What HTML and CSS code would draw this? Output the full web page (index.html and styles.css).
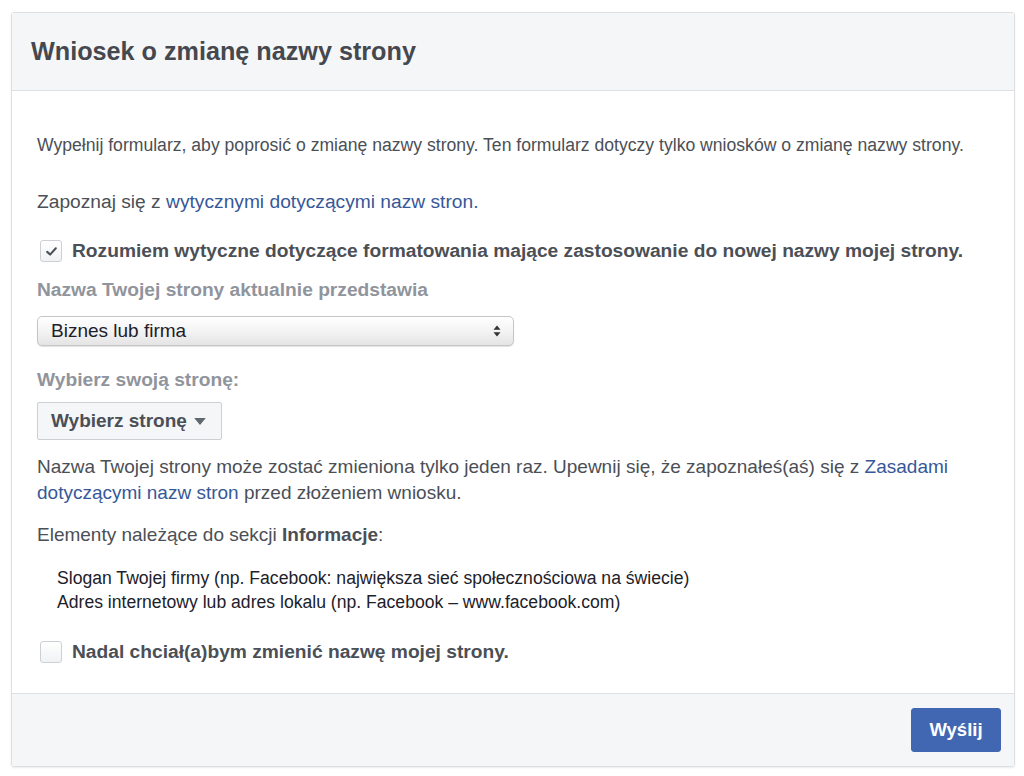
FILE: index.html
```html
<!DOCTYPE html>
<html lang="pl">
<head>
<meta charset="utf-8">
<title>Wniosek o zmianę nazwy strony</title>
<link rel="stylesheet" href="styles.css">
</head>
<body>
<div class="card">
  <div class="card-header">
    <h1 class="title">Wniosek o zmianę nazwy strony</h1>
  </div>
  <div class="card-body">
    <p class="intro">Wypełnij formularz, aby poprosić o zmianę nazwy strony. Ten formularz dotyczy tylko wniosków o zmianę nazwy strony.</p>
    <p class="guide">Zapoznaj się z <a href="#" class="link">wytycznymi dotyczącymi nazw stron.</a></p>
    <label class="check-row check-first">
      <span class="checkbox checked">
        <svg viewBox="0 0 16 16" width="15" height="15"><path d="M3.4 8.4 L6.5 11.3 L12.6 4.6" fill="none" stroke="#4b4f56" stroke-width="2.2" stroke-linecap="round" stroke-linejoin="round"/></svg>
      </span>
      <span class="check-label">Rozumiem wytyczne dotyczące formatowania mające zastosowanie do nowej nazwy mojej strony.</span>
    </label>
    <div class="field-label">Nazwa Twojej strony aktualnie przedstawia</div>
    <div class="select">
      <span class="select-text">Biznes lub firma</span>
      <svg class="select-arrows" viewBox="0 0 8 12" width="8" height="12"><path d="M4 0.5 L7.5 4.8 H0.5 Z M4 11.5 L7.5 7.2 H0.5 Z" fill="#333"/></svg>
    </div>
    <div class="field-label field-label-2">Wybierz swoją stronę:</div>
    <div class="dropdown-btn">
      <span>Wybierz stronę</span>
      <svg viewBox="0 0 10 6" width="12" height="7"><path d="M0 0 H10 L5 6 Z" fill="#606770"/></svg>
    </div>
    <p class="notice">Nazwa Twojej strony może zostać zmieniona tylko jeden raz. Upewnij się, że zapoznałeś(aś) się z <a href="#" class="link">Zasadami</a> <a href="#" class="link">dotyczącymi nazw stron</a> przed złożeniem wniosku.</p>
    <p class="elements">Elementy należące do sekcji <b>Informacje</b>:</p>
    <ul class="items">
      <li>Slogan Twojej firmy (np. Facebook: największa sieć społecznościowa na świecie)</li>
      <li>Adres internetowy lub adres lokalu (np. Facebook – www.facebook.com)</li>
    </ul>
    <label class="check-row check-last">
      <span class="checkbox"></span>
      <span class="check-label">Nadal chciał(a)bym zmienić nazwę mojej strony.</span>
    </label>
  </div>
  <div class="card-footer">
    <button class="submit">Wyślij</button>
  </div>
</div>
</body>
</html>
```

FILE: styles.css
```css
* { box-sizing: border-box; }
html, body { margin: 0; padding: 0; background: #fff; }
body {
  padding: 12px 9px 10px 11px;
  font-family: "Liberation Sans", Arial, sans-serif;
  color: #4b4f56;
}
.card {
  border: 1px solid #dddfe2;
  border-radius: 3px;
  width: 1004px;
  background: #fff;
  box-shadow: 0 1px 2px rgba(0,0,0,0.08);
}
.card-header {
  background: #f5f6f7;
  border-bottom: 1px solid #dddfe2;
  height: 78px;
  display: flex;
  align-items: center;
  padding-left: 19px;
}
.title {
  margin: 0;
  font-size: 25.2px;
  line-height: 30px;
  font-weight: bold;
  color: #45484e;
  padding-bottom: 1px;
}
.card-body {
  padding: 41px 25px 29px 25px;
  font-size: 19px;
}
p { margin: 0; }
.intro { line-height: 26px; font-size: 17.6px; }
.guide { margin-top: 31px; line-height: 26px; font-size: 19.2px; }
.link { color: #365899; text-decoration: none; }
.check-row {
  display: flex;
  align-items: center;
  gap: 10px;
  height: 24px;
  cursor: pointer;
}
.check-first { margin-top: 24px; padding-left: 3px; }
.checkbox {
  width: 22px;
  height: 22px;
  border: 1px solid #ccd0d5;
  border-radius: 3px;
  background: linear-gradient(#fff, #f1f2f4);
  display: flex;
  align-items: center;
  justify-content: center;
  flex: none;
}
.check-label {
  font-size: 19.2px;
  font-weight: bold;
  color: #4b4f56;
}
.field-label {
  margin-top: 15px;
  font-size: 19.2px;
  line-height: 24px;
  font-weight: bold;
  color: #90949c;
}
.select {
  margin-top: 14px;
  width: 477px;
  height: 30px;
  border: 1px solid #c4c6ca;
  border-radius: 5px;
  background: linear-gradient(#ffffff, #f2f2f2 55%, #e4e4e4);
  box-shadow: 0 1px 1px rgba(0,0,0,0.12);
  display: flex;
  align-items: center;
  justify-content: space-between;
  padding: 0 12px 0 13px;
  font-size: 19px;
  color: #1d2129;
}
.field-label-2 { margin-top: 22px; }
.dropdown-btn {
  margin-top: 10px;
  display: flex;
  align-items: center;
  gap: 7px;
  height: 38px;
  width: 185px;
  padding: 0 13px;
  border: 1px solid #ccd0d5;
  border-radius: 2px;
  background: #f5f6f7;
  font-size: 19px;
  font-weight: bold;
  color: #4b4f56;
}
.notice { margin-top: 14px; line-height: 26px; font-size: 19px; }
.elements { margin-top: 16px; line-height: 26px; font-size: 19px; }
.elements b { color: #4b4f56; }
.items {
  list-style: none;
  margin: 18px 0 0 0;
  padding-left: 20px;
  font-size: 17.6px;
  line-height: 24px;
  color: #1d2129;
}
.check-last { margin-top: 26px; padding-left: 3px; }
.card-footer {
  background: #f5f6f7;
  border-top: 1px solid #dddfe2;
  height: 73px;
  display: flex;
  align-items: center;
  justify-content: flex-end;
  padding-right: 13px;
}
.submit {
  width: 90px;
  height: 44px;
  background: #4267b2;
  border: 1px solid #4267b2;
  border-radius: 3px;
  color: #fff;
  font-family: "Liberation Sans", Arial, sans-serif;
  font-size: 18.5px;
  font-weight: bold;
}
```
